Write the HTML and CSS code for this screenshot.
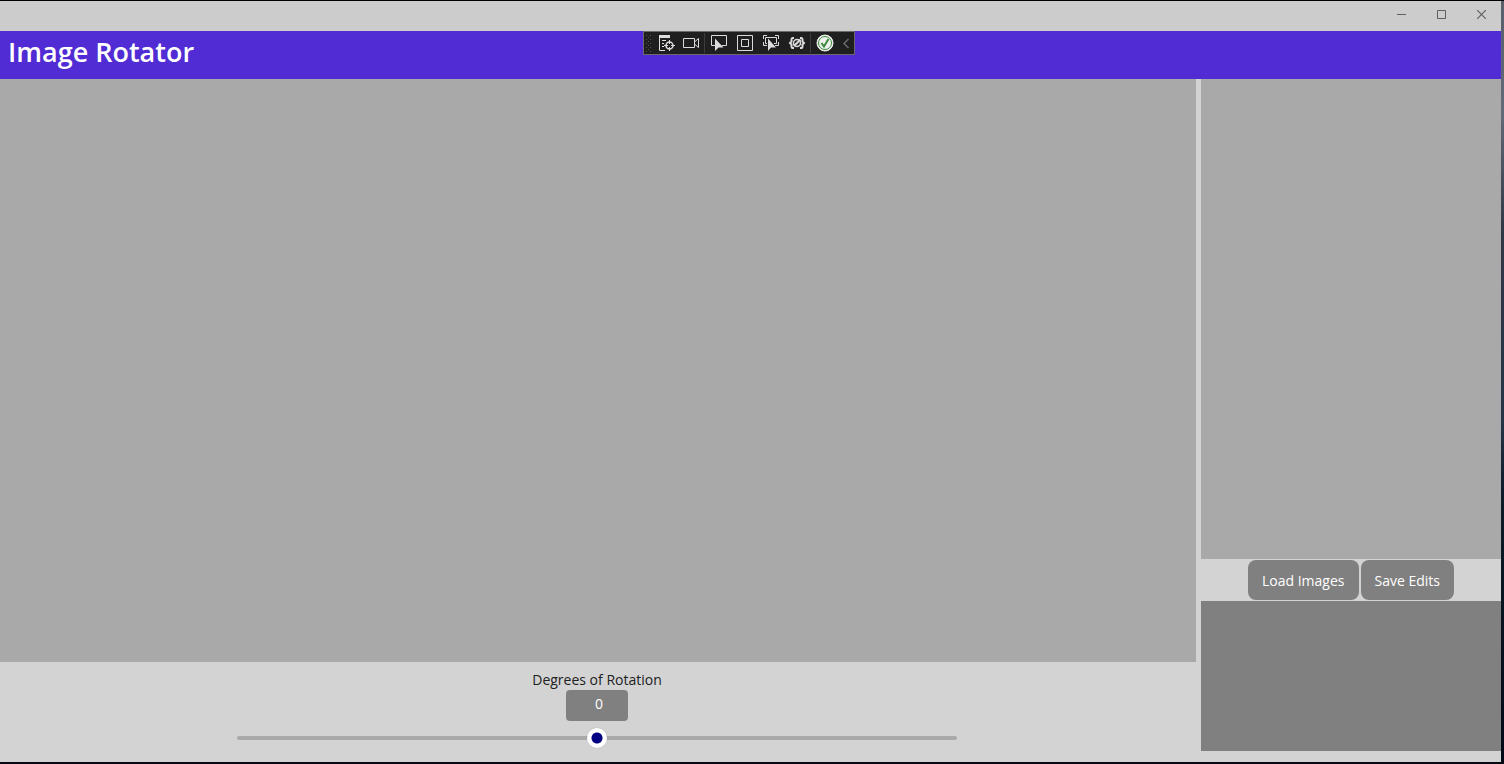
FILE: index.html
```html
<!DOCTYPE html>
<html lang="en">
<head>
<meta charset="utf-8">
<title>Image Rotator</title>
<link rel="stylesheet" href="styles.css">
</head>
<body>
<div class="window">
  <div class="titlebar">
    <button class="caption" type="button" aria-label="Minimize"><svg width="9" height="9" viewBox="0 0 9 9"><path d="M0 4.500h9"/></svg></button>
    <button class="caption" type="button" aria-label="Maximize"><svg width="9" height="9" viewBox="0 0 9 9"><path d="M.5.5h8v8h-8z"/></svg></button>
    <button class="caption" type="button" aria-label="Close"><svg width="9" height="9" viewBox="0 0 9 9"><path d="M0 0l9 9M9 0L0 9" stroke-width="1.200"/></svg></button>
  </div>
  <header class="header">
    <h1 class="title">Image Rotator</h1>
    <div class="debug-bar" role="toolbar" aria-label="Debug tools">
      <svg class="grip" width="6" height="17" viewBox="0 0 6 17"><path d="M.5 0v17M4.500 0v17" stroke-dasharray="1 3"/><path d="M2.500 2v15" stroke-dasharray="1 3"/></svg>
      <button class="tool narrow" type="button" aria-label="Live visual tree"><svg width="18" height="18" viewBox="0 0 18 18"><path class="solid" d="M2 1h11v3H2z"/><path d="M2.500 4v12.500H8M5 6.500h4M5 9.500h2M5 12.500h2"/><circle cx="12.500" cy="11.500" r="3.500" stroke-width="1.500"/><path d="M12.500 6v4M12.500 13v4M7 11.500h4M14 11.500h4"/></svg></button>
      <button class="tool narrow" type="button" aria-label="Record"><svg width="18" height="18" viewBox="0 0 18 18"><path d="M1.500 4.500h11v9h-11zM12.500 8l4-3.500v9l-4-3.500"/></svg></button>
      <span class="rule"></span>
      <button class="tool" type="button" aria-label="Select element"><svg width="18" height="18" viewBox="0 0 18 18"><path d="M5 11.500H1.500v-10h15v10H12"/><path class="solid" d="M5 4.500V17l3.500-3.500h5z"/></svg></button>
      <button class="tool" type="button" aria-label="Layout adorners"><svg width="18" height="18" viewBox="0 0 18 18"><path d="M1.500 1.500h15v15h-15zM5.500 5.500h7v7h-7z"/></svg></button>
      <button class="tool" type="button" aria-label="Track focused element"><svg width="18" height="18" viewBox="0 0 18 18"><path d="M1.500 5V1.500H5M13 1.500h3.500V5M1.500 8v3.500H5M16.500 8v3.500H13M5 9.500H3.500v-6h11v6H12"/><path class="solid" d="M6 4.500V17l3-3.500h5z"/></svg></button>
      <button class="tool" type="button" aria-label="Binding failures"><svg width="18" height="18" viewBox="0 0 18 18"><path d="M6 4H4.500Q3.500 4 3.500 5.500V7.500L2 9l1.500 1.500v2Q3.500 14 4.500 14H6M12 4h1.500q1 0 1 1.500v2L16 9l-1.500 1.500v2q0 1.500-1 1.500H12" stroke-width="2"/><circle cx="9" cy="9" r="3.500" stroke-width="1.500"/><path d="M6 12l6.500-6.500" stroke-width="2"/></svg></button>
      <span class="rule"></span>
      <button class="tool" type="button" aria-label="Hot reload"><svg width="18" height="18" viewBox="0 0 18 18"><circle cx="9" cy="9" r="8" fill="#f0f0f0" stroke="#f0f0f0"/><circle class="ok" cx="9" cy="9" r="6.500"/><path class="ok tick" d="M5.500 9l2.500 3.500L12.500 5"/></svg></button>
      <button class="fold" type="button" aria-label="Collapse"><svg width="8" height="12" viewBox="0 0 8 12"><path d="M6.500 2L2 6.500 6.500 11" stroke-width="1.500"/></svg></button>
    </div>
  </header>
  <main class="workspace">
    <section class="editor">
      <div class="canvas"></div>
      <div class="controls">
        <label for="degrees">Degrees of Rotation</label>
        <input class="degrees" id="degrees" type="text" value="0">
        <input class="slider" type="range" min="-180" max="180" value="0" aria-label="Rotation">
      </div>
    </section>
    <aside class="side">
      <div class="preview"></div>
      <div class="actions">
        <button class="action" type="button">Load Images</button>
        <button class="action" type="button">Save Edits</button>
      </div>
      <div class="list"></div>
    </aside>
  </main>
</div>
</body>
</html>
```

FILE: styles.css
```css
* { box-sizing: border-box; }
body {
  margin: 0;
  height: 100vh;
  padding: 1px 3px 2px 0;
  background: linear-gradient(#59606c 0, #626978 15%, #303746 30%, #263448 55%, #0b1b28 65%, #030914 100%);
  font: 14px/20px "Open Sans", "Noto Sans", sans-serif;
  box-shadow: inset 0 1px #000, inset 0 -2px #060a12;
}
button, input { margin: 0; font: inherit; }
button { padding: 0; border: 0; background: none; color: inherit; }
svg { display: block; fill: none; stroke: currentColor; }

.window { display: flex; flex-direction: column; height: 100%; background: #d3d3d3; }
.titlebar { display: flex; flex: none; justify-content: flex-end; height: 30px; background: #ccc; }
.caption { display: grid; place-items: center; width: 40px; height: 27px; color: #606060; }

.header { position: relative; flex: none; height: 48px; padding: 3px 8px; background: #512bd4; }
.title { margin: 0; color: #fff; font-size: 27px; font-weight: 600; line-height: 36px; }
.debug-bar {
  position: absolute;
  top: 0;
  left: 50%;
  display: flex;
  align-items: center;
  width: 212px;
  height: 24px;
  margin-left: -108px;
  padding-left: 2px;
  border: 1px solid #6a6a6a;
  background: #1f1f1f;
  color: #dcdcdc;
}
.grip { margin-right: 2px; color: #555; }
.tool { display: grid; flex: none; place-items: center; width: 26px; height: 22px; }
.narrow { width: 25px; }
.rule { width: 1px; height: 20px; margin-right: 1px; background: #3d3d3d; }
.solid { fill: currentColor; stroke: none; }
.ok { stroke: #388a34; }
.tick { stroke-width: 2; }
.fold { display: grid; flex: 1; place-items: center; color: #6a6a6a; }

.workspace { display: flex; flex: 1; gap: 5px; min-height: 0; }
.editor { display: flex; flex: 1; flex-direction: column; }
.canvas { flex: 1; background: #a9a9a9; }
.controls { display: flex; flex-direction: column; align-items: center; height: 100px; padding: 8px 2px 0 0; color: #212121; }
.degrees {
  width: 62px;
  height: 31px;
  padding: 0 0 4px 4px;
  border: 0;
  border-radius: 4px;
  background: #808080;
  color: #fff;
  text-align: center;
}
.slider { width: 720px; max-width: 100%; height: 20px; margin-top: 7px; appearance: none; background: none; }
.slider::-webkit-slider-runnable-track { height: 4px; border-radius: 2px; background: #a9a9a9; }
.slider::-webkit-slider-thumb {
  width: 20px;
  height: 20px;
  margin-top: -8px;
  appearance: none;
  border-radius: 50%;
  background: radial-gradient(circle, #000080 5px, #fff 6px);
  box-shadow: 0 0 1px #999;
}

.side { display: flex; flex: none; flex-direction: column; width: 300px; padding-bottom: 11px; }
.preview { flex: 1; background: #a9a9a9; }
.actions { display: flex; justify-content: center; gap: 2px; padding: 1px 0; }
.action { height: 40px; padding: 2px 14px 0; border-radius: 8px; background: #808080; color: #fff; }
.list { height: 150px; background: #808080; }
```
